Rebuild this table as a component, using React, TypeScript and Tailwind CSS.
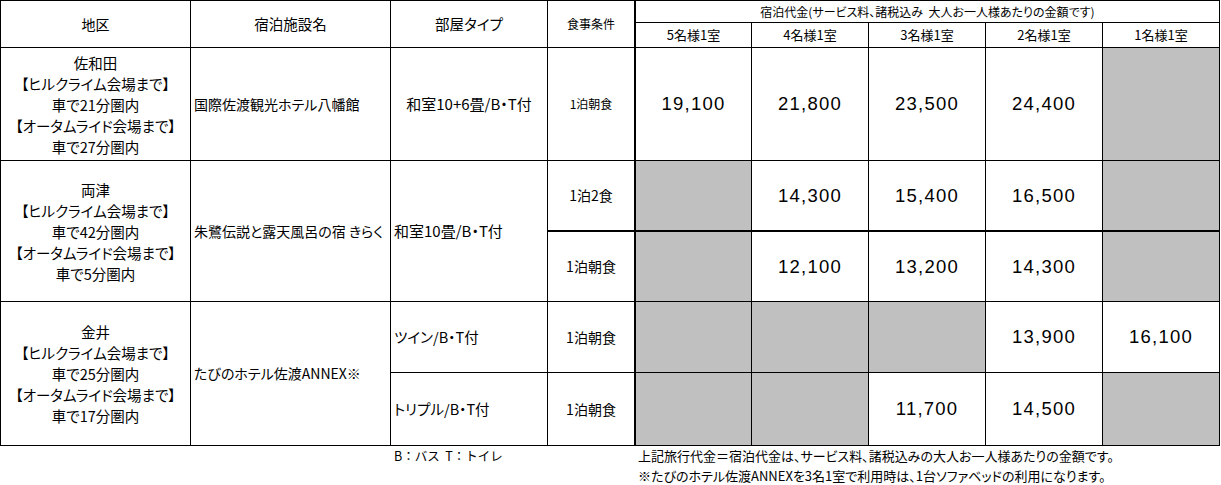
import React from "react";

const B = "border-black border-r border-b flex items-center";
const C = `${B} justify-center text-center`;
const L = `${B} justify-start pl-[3px]`;
const P = `${C} [font-family:'Liberation_Sans',Arial,sans-serif] text-[18.5px] tracking-[1.2px] [font-feature-settings:normal]`;
const G = `${B} bg-[#c0c0c0]`;

function Area({ name, hill, autumn }: { name: string; hill: string; autumn: string }) {
  return (
    <div className="text-[14.5px] leading-[21px] text-center">
      <div>{name}</div>
      <div>【ヒルクライム会場まで】</div>
      <div>車で{hill}分圏内</div>
      <div>【オータムライド会場まで】</div>
      <div>車で{autumn}分圏内</div>
    </div>
  );
}

export default function App() {
  return (
    <div className="w-[1221px] h-[485px] bg-white text-black overflow-hidden [font-family:'Noto_Sans_CJK_JP',sans-serif] [font-feature-settings:'palt']">
      <div className="grid grid-cols-[191px_200px_157px_88px_116px_117px_117px_117px_117px] grid-rows-[23px_25px_113px_71px_70px_71px_73px]">
        {/* header */}
        <div className={`${C} col-start-1 row-start-1 row-span-2 border-l border-t text-[14px]`}>地区</div>
        <div className={`${C} col-start-2 row-start-1 row-span-2 border-t text-[14.5px]`}>宿泊施設名</div>
        <div className={`${C} col-start-3 row-start-1 row-span-2 border-t text-[14.5px]`}>部屋タイプ</div>
        <div className={`${C} col-start-4 row-start-1 row-span-2 border-t border-r-2 text-[12px]`}>食事条件</div>
        <div className={`${C} col-start-5 col-span-5 row-start-1 border-t text-[12px]`}>
          宿泊代金(サービス料、諸税込み&nbsp;&nbsp;大人お一人様あたりの金額です)
        </div>
        <div className={`${C} col-start-5 row-start-2 text-[13px]`}>5名様1室</div>
        <div className={`${C} col-start-6 row-start-2 text-[13px]`}>4名様1室</div>
        <div className={`${C} col-start-7 row-start-2 text-[13px]`}>3名様1室</div>
        <div className={`${C} col-start-8 row-start-2 text-[13px]`}>2名様1室</div>
        <div className={`${C} col-start-9 row-start-2 text-[13px]`}>1名様1室</div>

        {/* row 1 */}
        <div className={`${C} col-start-1 row-start-3 border-l`}>
          <Area name="佐和田" hill="21" autumn="27" />
        </div>
        <div className={`${L} col-start-2 row-start-3 text-[14px]`}>国際佐渡観光ホテル八幡館</div>
        <div className={`${C} col-start-3 row-start-3 text-[15px]`}>和室10+6畳/B・T付</div>
        <div className={`${C} col-start-4 row-start-3 border-r-2 text-[12px]`}>1泊朝食</div>
        <div className={`${P} col-start-5 row-start-3`}>19,100</div>
        <div className={`${P} col-start-6 row-start-3`}>21,800</div>
        <div className={`${P} col-start-7 row-start-3`}>23,500</div>
        <div className={`${P} col-start-8 row-start-3`}>24,400</div>
        <div className={`${G} col-start-9 row-start-3`} />

        {/* row 2 */}
        <div className={`${C} col-start-1 row-start-4 row-span-2 border-l`}>
          <Area name="両津" hill="42" autumn="5" />
        </div>
        <div className={`${L} col-start-2 row-start-4 row-span-2 text-[14px]`}>朱鷺伝説と露天風呂の宿 きらく</div>
        <div className={`${L} col-start-3 row-start-4 row-span-2 text-[15px]`}>和室10畳/B・T付</div>
        <div className={`${C} col-start-4 row-start-4 border-r-2 border-b-2 text-[14px]`}>1泊2食</div>
        <div className={`${G} col-start-5 row-start-4 border-b-2`} />
        <div className={`${P} col-start-6 row-start-4 border-b-2`}>14,300</div>
        <div className={`${P} col-start-7 row-start-4 border-b-2`}>15,400</div>
        <div className={`${P} col-start-8 row-start-4 border-b-2`}>16,500</div>
        <div className={`${G} col-start-9 row-start-4 border-b-2`} />

        <div className={`${C} col-start-4 row-start-5 border-r-2 text-[14px]`}>1泊朝食</div>
        <div className={`${G} col-start-5 row-start-5`} />
        <div className={`${P} col-start-6 row-start-5`}>12,100</div>
        <div className={`${P} col-start-7 row-start-5`}>13,200</div>
        <div className={`${P} col-start-8 row-start-5`}>14,300</div>
        <div className={`${G} col-start-9 row-start-5`} />

        {/* row 3 */}
        <div className={`${C} col-start-1 row-start-6 row-span-2 border-l`}>
          <Area name="金井" hill="25" autumn="17" />
        </div>
        <div className={`${L} col-start-2 row-start-6 row-span-2 text-[14px]`}>たびのホテル佐渡ANNEX※</div>
        <div className={`${L} col-start-3 row-start-6 text-[14.5px]`}>ツイン/B・T付</div>
        <div className={`${C} col-start-4 row-start-6 border-r-2 text-[14px]`}>1泊朝食</div>
        <div className={`${G} col-start-5 row-start-6`} />
        <div className={`${G} col-start-6 row-start-6`} />
        <div className={`${G} col-start-7 row-start-6`} />
        <div className={`${P} col-start-8 row-start-6`}>13,900</div>
        <div className={`${P} col-start-9 row-start-6`}>16,100</div>

        <div className={`${L} col-start-3 row-start-7 text-[14.5px]`}>トリプル/B・T付</div>
        <div className={`${C} col-start-4 row-start-7 border-r-2 text-[14px]`}>1泊朝食</div>
        <div className={`${G} col-start-5 row-start-7`} />
        <div className={`${G} col-start-6 row-start-7`} />
        <div className={`${P} col-start-7 row-start-7`}>11,700</div>
        <div className={`${P} col-start-8 row-start-7`}>14,500</div>
        <div className={`${G} col-start-9 row-start-7`} />
      </div>

      {/* footer notes */}
      <div className="grid grid-cols-[391px_245px_1fr] text-[13px] leading-[20px]">
        <div />
        <div className="pl-[3px] text-[12.5px] [font-feature-settings:normal]">B：バス&nbsp;&nbsp;T：トイレ</div>
        <div className="pl-[2px]">
          <div>上記旅行代金＝宿泊代金は、サービス料、諸税込みの大人お一人様あたりの金額です。</div>
          <div>※たびのホテル佐渡ANNEXを3名1室で利用時は、1台ソファベッドの利用になります。</div>
        </div>
      </div>
    </div>
  );
}
